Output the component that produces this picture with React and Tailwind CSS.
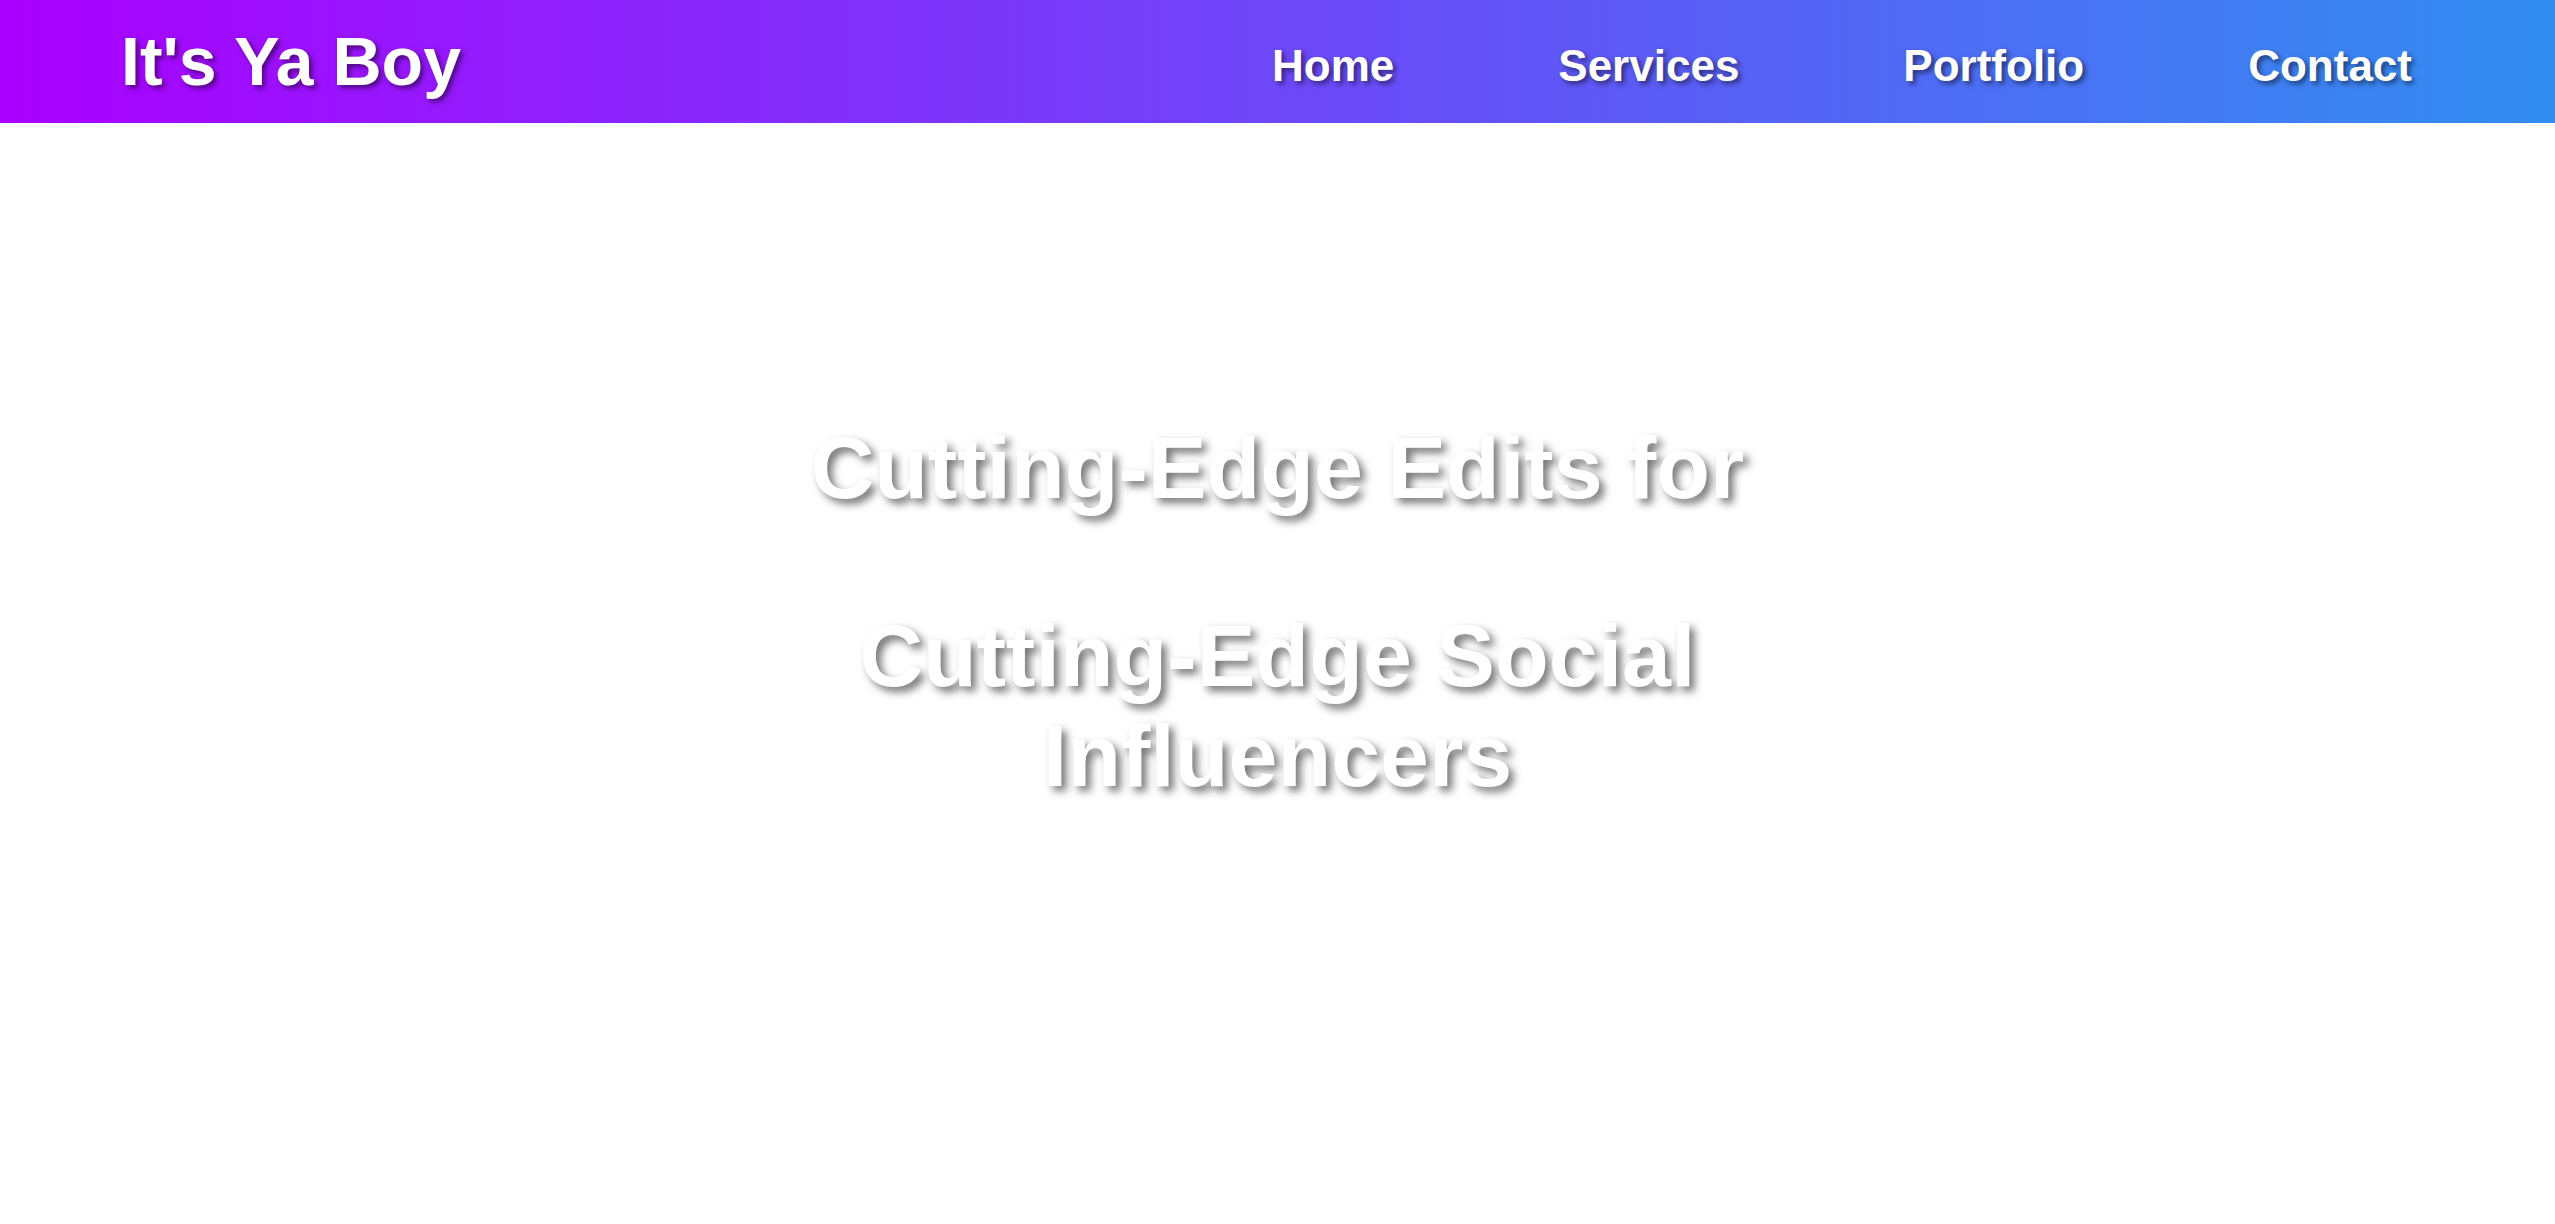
import React from 'react';

const links = ['Home', 'Services', 'Portfolio', 'Contact'];

export default function App() {
  return (
    <div className="min-h-screen bg-white font-['Liberation_Sans',Arial,sans-serif]">
      {/* Header */}
      <header className="fixed top-0 left-0 right-0 z-10 h-[123px] flex items-center justify-between pl-[121px] pr-[143px] bg-[linear-gradient(to_right,#aa00ff,#318ef1)]">
        <div className="text-[68px] leading-[1.15] font-bold text-white [text-shadow:3px_3px_5px_rgba(0,0,0,0.5)]">
          It's Ya Boy
        </div>
        <nav className="mt-[9px]">
          <ul className="flex gap-[164px]">
            {links.map((link) => (
              <li key={link}>
                <a href="#" className="text-[44px] leading-[1.15] font-bold text-white [text-shadow:3px_3px_5px_rgba(0,0,0,0.5)]">
                  {link}
                </a>
              </li>
            ))}
          </ul>
        </nav>
      </header>

      {/* Hero */}
      <section className="h-screen flex flex-col items-center justify-center text-center">
        <div className="max-w-[1200px]">
          <h1 className="text-[88px] leading-[1.14] font-bold text-white [text-shadow:5px_5px_8px_rgba(0,0,0,0.55)]">
            Cutting-Edge Edits for
          </h1>
          <h1 className="mt-[88px] text-[88px] leading-[1.14] font-bold text-white [text-shadow:5px_5px_8px_rgba(0,0,0,0.55)]">
            Cutting-Edge Social Influencers
          </h1>
        </div>
      </section>
    </div>
  );
}
